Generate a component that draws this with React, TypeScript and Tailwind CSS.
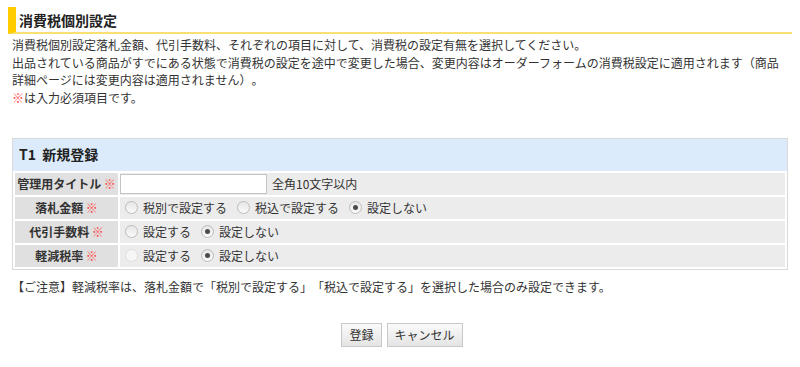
import React from 'react';

const Req = () => <span className="text-[#ff4040]">※</span>;

const Radio = ({ checked = false, disabled = false }: { checked?: boolean; disabled?: boolean }) => (
  <span
    className={`inline-flex h-[13px] w-[13px] shrink-0 items-center justify-center rounded-full border ${
      disabled ? 'border-[#dedede] bg-[#f6f6f6]' : 'border-[#bdbdbd] bg-gradient-to-b from-[#e6e6e6] to-[#fafafa]'
    }`}
  >
    {checked && <span className="h-[5px] w-[5px] rounded-full bg-[#4a4a4a]" />}
  </span>
);

const Option = ({ label, checked, disabled }: { label: string; checked?: boolean; disabled?: boolean }) => (
  <label className="mr-[10px] flex items-center gap-[5px]">
    <Radio checked={checked} disabled={disabled} />
    <span>{label}</span>
  </label>
);

const App: React.FC = () => {
  return (
    <div
      className="min-h-[367px] bg-white px-2 pt-[7px] text-[12px] text-[#333] [text-spacing-trim:space-all]"
      style={{ fontFamily: '"Noto Sans CJK JP", "Noto Sans", sans-serif' }}
    >
      {/* Heading */}
      <h2 className="flex h-[27px] items-center border-b-2 border-l-8 border-b-[#fadf73] border-l-[#ffcc00] pl-[3px] text-[14px] font-bold leading-none text-[#222]">
        消費税個別設定
      </h2>

      <div className="px-1">
        <p className="mt-[2px] leading-[17.7px]">
          消費税個別設定落札金額、代引手数料、それぞれの項目に対して、消費税の設定有無を選択してください。
          <br />
          出品されている商品がすでにある状態で消費税の設定を途中で変更した場合、変更内容はオーダーフォームの消費税設定に適用されます（商品
          <br />
          詳細ページには変更内容は適用されません）。
          <br />
          <Req />は入力必須項目です。
        </p>

        {/* Form box */}
        <div className="mt-[31px] border border-[#dadada]">
          <div className="flex h-[32px] items-center bg-[#dcebfc] pl-[6px] text-[14px] font-bold text-[#222]">
            T1&nbsp;&nbsp;新規登録
          </div>
          <table className="w-full border-separate border-spacing-[2px]">
            <tbody>
              <tr className="h-[22px]">
                <th className="w-[103px] bg-[#e0e0e0] p-0 text-center font-bold">
                  管理用タイトル <Req />
                </th>
                <td className="bg-[#ececec] p-0">
                  <div className="flex items-center gap-[5px]">
                    <input className="h-[20px] w-[147px] border border-[#c4c4c4] bg-white px-1 text-[12px] outline-none" />
                    <span>全角10文字以内</span>
                  </div>
                </td>
              </tr>
              <tr className="h-[22px]">
                <th className="bg-[#e0e0e0] p-0 text-center font-bold">
                  落札金額 <Req />
                </th>
                <td className="bg-[#ececec] py-0 pl-[5px]">
                  <div className="flex items-center">
                    <Option label="税別で設定する" />
                    <Option label="税込で設定する" />
                    <Option label="設定しない" checked />
                  </div>
                </td>
              </tr>
              <tr className="h-[22px]">
                <th className="bg-[#e0e0e0] p-0 text-center font-bold">
                  代引手数料 <Req />
                </th>
                <td className="bg-[#ececec] py-0 pl-[5px]">
                  <div className="flex items-center">
                    <Option label="設定する" />
                    <Option label="設定しない" checked />
                  </div>
                </td>
              </tr>
              <tr className="h-[22px]">
                <th className="bg-[#e0e0e0] p-0 text-center font-bold">
                  軽減税率 <Req />
                </th>
                <td className="bg-[#ececec] py-0 pl-[5px]">
                  <div className="flex items-center">
                    <Option label="設定する" disabled />
                    <Option label="設定しない" checked />
                  </div>
                </td>
              </tr>
            </tbody>
          </table>
        </div>

        <p className="mt-[8px] leading-[18px]">
          【ご注意】軽減税率は、落札金額で「税別で設定する」「税込で設定する」を選択した場合のみ設定できます。
        </p>

        <div className="mt-[27px] flex justify-center gap-[5px] pl-[4px]">
          <button className="h-[24px] border border-[#c8c8c8] bg-gradient-to-b from-[#fafafa] to-[#e4e4e4] px-[7px] text-[12px] text-[#333]">
            登録
          </button>
          <button className="h-[24px] border border-[#c8c8c8] bg-gradient-to-b from-[#fafafa] to-[#e4e4e4] px-[7px] text-[12px] text-[#333]">
            キャンセル
          </button>
        </div>
      </div>
    </div>
  );
};

export default App;
